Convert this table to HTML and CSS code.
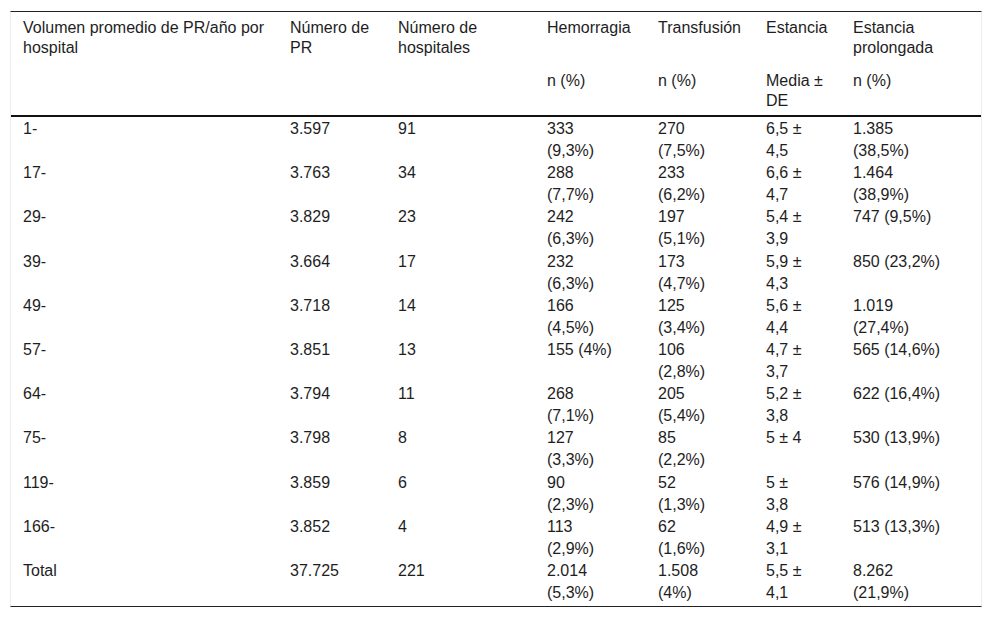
FILE: index.html
```html
<!DOCTYPE html>
<html lang="es">
<head>
<meta charset="utf-8">
<title>Tabla</title>
<link rel="stylesheet" href="styles.css">
</head>
<body>
<div class="wrap">
<table class="tbl">
<colgroup>
<col class="w1"><col class="w2"><col class="w3"><col class="w4"><col class="w5"><col class="w6"><col class="w7">
</colgroup>
<thead>
<tr class="h1">
<th rowspan="2">Volumen promedio de PR/año por hospital</th>
<th rowspan="2">Número de PR</th>
<th rowspan="2">Número de hospitales</th>
<th>Hemorragia</th>
<th>Transfusión</th>
<th>Estancia</th>
<th>Estancia prolongada</th>
</tr>
<tr class="h2">
<th>n (%)</th>
<th>n (%)</th>
<th>Media ± DE</th>
<th>n (%)</th>
</tr>
</thead>
<tbody>
<tr><td>1-</td><td>3.597</td><td>91</td><td>333 (9,3%)</td><td>270 (7,5%)</td><td>6,5 ± 4,5</td><td>1.385 (38,5%)</td></tr>
<tr><td>17-</td><td>3.763</td><td>34</td><td>288 (7,7%)</td><td>233 (6,2%)</td><td>6,6 ± 4,7</td><td>1.464 (38,9%)</td></tr>
<tr><td>29-</td><td>3.829</td><td>23</td><td>242 (6,3%)</td><td>197 (5,1%)</td><td>5,4 ± 3,9</td><td>747 (9,5%)</td></tr>
<tr><td>39-</td><td>3.664</td><td>17</td><td>232 (6,3%)</td><td>173 (4,7%)</td><td>5,9 ± 4,3</td><td>850 (23,2%)</td></tr>
<tr><td>49-</td><td>3.718</td><td>14</td><td>166 (4,5%)</td><td>125 (3,4%)</td><td>5,6 ± 4,4</td><td>1.019 (27,4%)</td></tr>
<tr><td>57-</td><td>3.851</td><td>13</td><td>155 (4%)</td><td>106 (2,8%)</td><td>4,7 ± 3,7</td><td>565 (14,6%)</td></tr>
<tr><td>64-</td><td>3.794</td><td>11</td><td>268 (7,1%)</td><td>205 (5,4%)</td><td>5,2 ± 3,8</td><td>622 (16,4%)</td></tr>
<tr><td>75-</td><td>3.798</td><td>8</td><td>127 (3,3%)</td><td>85 (2,2%)</td><td>5 ± 4</td><td>530 (13,9%)</td></tr>
<tr><td>119-</td><td>3.859</td><td>6</td><td>90 (2,3%)</td><td>52 (1,3%)</td><td>5 ± 3,8</td><td>576 (14,9%)</td></tr>
<tr><td>166-</td><td>3.852</td><td>4</td><td>113 (2,9%)</td><td>62 (1,6%)</td><td>4,9 ± 3,1</td><td>513 (13,3%)</td></tr>
<tr class="last"><td>Total</td><td>37.725</td><td>221</td><td>2.014 (5,3%)</td><td>1.508 (4%)</td><td>5,5 ± 4,1</td><td>8.262 (21,9%)</td></tr>
</tbody>
</table>
</div>
</body>
</html>
```
FILE: styles.css
```css
html, body {
  margin: 0;
  padding: 0;
  background: #ffffff;
}
body {
  font-family: "Liberation Sans", Arial, sans-serif;
  font-size: 16px;
  color: #1e1e1e;
}
.wrap {
  margin: 11px 10px 0 10px;
  width: 970px;
  border-top: 1px solid #222222;
  border-bottom: 1px solid #222222;
  border-left: 1px solid #ececec;
  border-right: 1px solid #ececec;
}
.tbl {
  width: 970px;
  table-layout: fixed;
  border-collapse: separate;
  border-spacing: 0;
}
.w1 { width: 267px; }
.w2 { width: 108px; }
.w3 { width: 149px; }
.w4 { width: 111px; }
.w5 { width: 108px; }
.w6 { width: 87px; }
.w7 { width: 140px; }
.tbl th {
  font-weight: normal;
  text-align: left;
  vertical-align: top;
  line-height: 20px;
  padding: 6px 2px 0 12px;
}
.tbl .h1 th {
  padding-bottom: 6px;
}
.tbl .h2 th {
  padding-top: 7px;
  padding-bottom: 4px;
  border-bottom: 2px solid #111111;
}
.tbl .h1 th[rowspan] {
  border-bottom: 2px solid #111111;
}
.tbl td {
  vertical-align: top;
  line-height: 22.1px;
  padding: 0 32px 0 12px;
}
.tbl tbody tr:first-child td {
  padding-top: 1px;
}
.tbl .last td {
  padding-bottom: 2px;
}
```
